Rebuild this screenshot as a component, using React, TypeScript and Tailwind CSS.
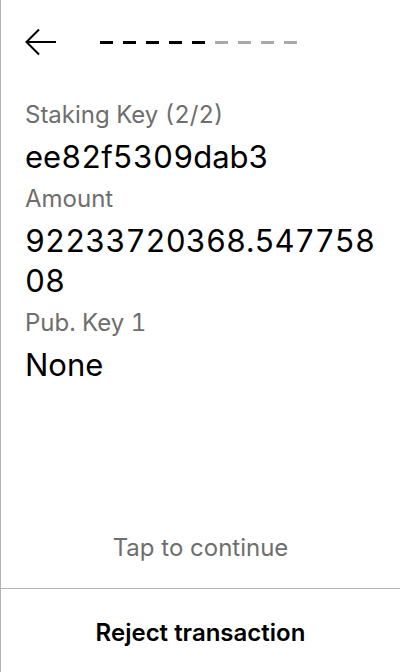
import React from "react";

// One field of the review screen: small grey label, big value below
interface Field {
  label: string;
  value: string;
}

const fields: Field[] = [
  { label: "Staking Key (2/2)", value: "ee82f5309dab3" },
  { label: "Amount", value: "92233720368.54775808" },
  { label: "Pub. Key 1", value: "None" },
];

const TOTAL_STEPS = 9;
const DONE_STEPS = 5;

function BackArrow() {
  return (
    <svg width="32" height="28" viewBox="0 0 32 28" fill="none">
      <path
        d="M31 14H2M14 1.5L1.5 14L14 26.5"
        stroke="black"
        strokeWidth="2"
      />
    </svg>
  );
}

export default function App() {
  return (
    <div
      className="flex h-[672px] w-[400px] flex-col border-l border-[#b3b3b3] bg-white text-black"
      style={{ fontFamily: "Inter, 'Noto Sans', sans-serif" }}
    >
      {/* header: back + step progress */}
      <div className="flex h-[84px] shrink-0 items-center pl-6">
        <BackArrow />
        <div className="ml-[43px] flex gap-[10px]">
          {Array.from({ length: TOTAL_STEPS }).map((_, i) => (
            <span
              key={i}
              className={
                i < DONE_STEPS
                  ? "h-[3px] w-[13px] bg-black"
                  : "h-[3px] w-[13px] bg-[#a9a9a9]"
              }
            />
          ))}
        </div>
      </div>

      <div className="mt-[17px] flex flex-1 flex-col gap-2 px-6">
        {fields.map((f) => (
          <React.Fragment key={f.label}>
            <p className="text-[24px] leading-[28px] text-[#6e6e6e] tabular-nums">
              {f.label}
            </p>
            <p className="break-all text-[31px] leading-[40px] tabular-nums">
              {f.value}
            </p>
          </React.Fragment>
        ))}
      </div>

      <div className="flex h-[84px] shrink-0 items-center justify-center pt-1 text-[24px] text-[#6e6e6e]">
        Tap to continue
      </div>
      <div className="flex h-[84px] shrink-0 items-center justify-center border-t border-[#b3b3b3] pt-1 text-[24px] font-semibold">
        Reject transaction
      </div>
    </div>
  );
}
